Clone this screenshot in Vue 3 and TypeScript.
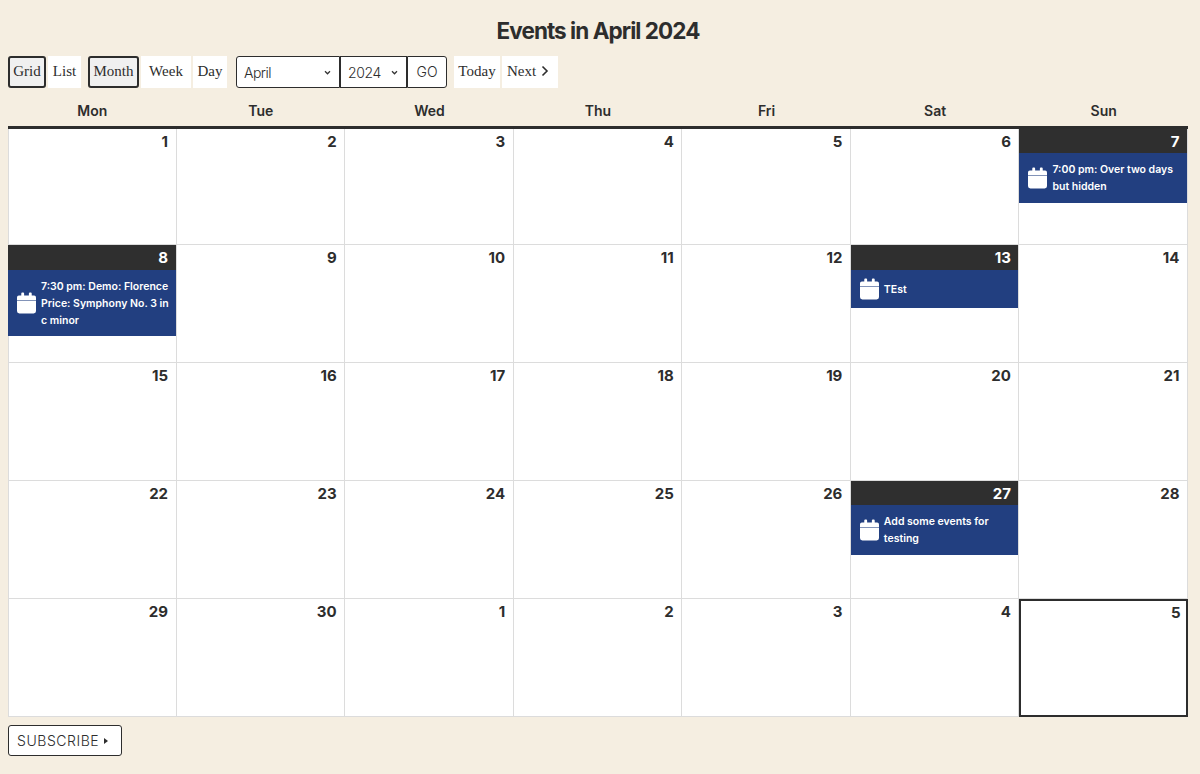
<script setup lang="ts">
interface Cell { day: number; has?: boolean; today?: boolean; event?: string }
const heads: string[] = ['Mon', 'Tue', 'Wed', 'Thu', 'Fri', 'Sat', 'Sun']
const plain = (d: number[]): Cell[] => d.map((day) => ({ day }))
const cells: Cell[] = [
  ...plain([1, 2, 3, 4, 5, 6]),
  { day: 7, has: true, event: '7:00 pm: Over two days but hidden' },
  { day: 8, has: true, event: '7:30 pm: Demo: Florence Price: Symphony No. 3 in c minor' },
  ...plain([9, 10, 11, 12]),
  { day: 13, has: true, event: 'TEst' },
  ...plain([14, 15, 16, 17, 18, 19, 20, 21, 22, 23, 24, 25, 26]),
  { day: 27, has: true, event: 'Add some events for testing' },
  ...plain([28, 29, 30, 1, 2, 3, 4]),
  { day: 5, today: true },
]
</script>

<template>
  <div class="page">
    <h2 class="title">Events in April 2024</h2>
    <div class="toolbar">
      <div class="group">
        <button class="tbtn active w-grid">Grid</button>
        <button class="tbtn w-list">List</button>
      </div>
      <div class="group">
        <button class="tbtn active w-month">Month</button>
        <button class="tbtn w-week">Week</button>
        <button class="tbtn w-day">Day</button>
      </div>
      <div class="picker">
        <div class="sel w-april">
          <span>April</span>
          <svg class="chev" viewBox="0 0 8 6"><path d="M1 1.5 L4 4.5 L7 1.5" fill="none" stroke="#333" stroke-width="1.5" /></svg>
        </div>
        <div class="sel w-year">
          <span>2024</span>
          <svg class="chev" viewBox="0 0 8 6"><path d="M1 1.5 L4 4.5 L7 1.5" fill="none" stroke="#333" stroke-width="1.5" /></svg>
        </div>
        <div class="sel w-go center">GO</div>
      </div>
      <div class="group nav">
        <button class="tbtn w-today">Today</button>
        <button class="tbtn w-next">
          Next
          <svg class="next" viewBox="0 0 8 12"><path d="M1.5 1.5 L6 6 L1.5 10.5" fill="none" stroke="#2d2d2d" stroke-width="1.6" /></svg>
        </button>
      </div>
    </div>

    <div class="heads">
      <div v-for="h in heads" :key="h" class="head">{{ h }}</div>
    </div>
    <div class="grid">
      <div
        v-for="(c, i) in cells"
        :key="i"
        class="cell"
        :class="{ today: c.today }"
      >
        <div class="date" :class="{ has: c.has }">{{ c.day }}</div>
        <div v-if="c.event" class="event">
          <svg class="cal" viewBox="0 0 20 22">
            <path d="M4.5 1a1 1 0 0 1 1-1h1a1 1 0 0 1 1 1v3h-3zM12.5 1a1 1 0 0 1 1-1h1a1 1 0 0 1 1 1v3h-3z" fill="#fff" />
            <path d="M0 5a2 2 0 0 1 2-2h16a2 2 0 0 1 2 2v3.2H0z" fill="#fff" />
            <path d="M0 8.5h20v11a2.5 2.5 0 0 1-2.5 2.5h-15A2.5 2.5 0 0 1 0 19.5z" fill="#fff" />
          </svg>
          <span class="etext">{{ c.event }}</span>
        </div>
      </div>
    </div>

    <button class="subscribe">SUBSCRIBE <span class="tri"></span></button>
  </div>
</template>

<style>
html, body { margin: 0; background: #f5eee1; }
</style>

<style scoped>
.page {
  width: 1180px;
  padding: 0 12px 18px 8px;
  font-family: Inter, "Liberation Sans", sans-serif;
  color: #2d2d2d;
}
.title {
  margin: 0;
  padding-top: 16px;
  height: 40px;
  font-size: 22.5px;
  line-height: 29px;
  font-weight: 700;
  letter-spacing: -0.95px;
  text-align: center;
  color: #2d2d2d;
}
.toolbar {
  display: flex;
  height: 32px;
  gap: 9px;
}
.group { display: flex; gap: 2px; }
.group.nav { margin-left: -2px; }
.group + .group { margin-left: -2px; }
.tbtn {
  box-sizing: border-box;
  height: 32px;
  padding: 0 0 2px;
  border: 0;
  background: #fff;
  font-family: "Liberation Serif", serif;
  font-size: 15px;
  color: #2d2d2d;
  display: flex;
  align-items: center;
  justify-content: center;
  gap: 5px;
}
.tbtn.active {
  background: #f0f0f0;
  border: 2px solid #2d2d2d;
  border-radius: 3px;
}
.w-grid { width: 38px; }
.w-list { width: 33px; }
.w-month { width: 51px; }
.w-week { width: 50px; }
.w-day { width: 34px; }
.w-today { width: 46px; }
.w-next { width: 56px; padding-right: 4px; }
.next { width: 8px; height: 12px; }
.picker { display: flex; }
.sel {
  box-sizing: border-box;
  height: 32px;
  background: #fff;
  border: 1px solid #2d2d2d;
  display: flex;
  align-items: center;
  justify-content: space-between;
  padding: 0 8px 0 7px;
  font-size: 14px;
  font-weight: 300;
  color: #2d2d2d;
}
.w-april { width: 104px; border-radius: 3px 0 0 3px; letter-spacing: -0.5px; }
.w-year { width: 67px; letter-spacing: -0.4px; }
.w-go { width: 40px; border-radius: 0 3px 3px 0; padding-bottom: 1px; }
.center { justify-content: center; padding-left: 0; padding-right: 0; }
.chev { width: 7px; height: 5px; }
.heads {
  display: grid;
  grid-template-columns: repeat(7, 1fr);
  height: 33px;
  box-sizing: border-box;
  border-bottom: 3px solid #2d2d2d;
  margin-top: 8px;
}
.head {
  text-align: center;
  font-size: 14px;
  font-weight: 600;
  line-height: 30px;
}
.grid {
  display: grid;
  grid-template-columns: repeat(7, 1fr);
  grid-template-rows: 116px repeat(4, 118px);
  background: #fff;
  box-shadow: inset 1px 0 #dcdcdc;
}
.cell {
  box-sizing: border-box;
  border-right: 1px solid #dcdcdc;
  border-bottom: 1px solid #dcdcdc;
  min-width: 0;
}
.cell.today {
  border: 2px solid #2d2d2d;
}
.date {
  height: 25px;
  padding-right: 7.5px;
  text-align: right;
  font-size: 15px;
  font-weight: 700;
  line-height: 25px;
  color: #2d2d2d;
}
.cell:nth-child(-n+7) .date,
.cell:nth-child(n+22):nth-child(-n+28) .date { height: 24px; }
.today .date { line-height: 23px; padding-right: 5.5px; }
.date.has {
  background: #2f2f2f;
  color: #fff;
}
.event {
  display: flex;
  align-items: center;
  gap: 5px;
  background: #223f80;
  color: #fff;
  padding: 8px 6px 8px 9px;
  font-size: 10.5px;
  line-height: 16.8px;
  font-weight: 600;
}
.cal { width: 19px; height: 22px; flex: none; }
.etext { min-width: 0; padding-top: 1px; margin-bottom: -1px; }
.subscribe {
  box-sizing: border-box;
  display: flex;
  align-items: center;
  gap: 5px;
  margin-top: 8px;
  width: 114px;
  height: 31px;
  padding: 0 0 0 8px;
  background: #fff;
  border: 1px solid #2d2d2d;
  border-radius: 3px;
  font-family: Inter, "Liberation Sans", sans-serif;
  font-size: 14px;
  font-weight: 300;
  color: #2d2d2d;
  letter-spacing: 0.55px;
}
.tri {
  width: 0;
  height: 0;
  border-left: 4px solid #2d2d2d;
  border-top: 3px solid transparent;
  border-bottom: 3px solid transparent;
}
</style>
